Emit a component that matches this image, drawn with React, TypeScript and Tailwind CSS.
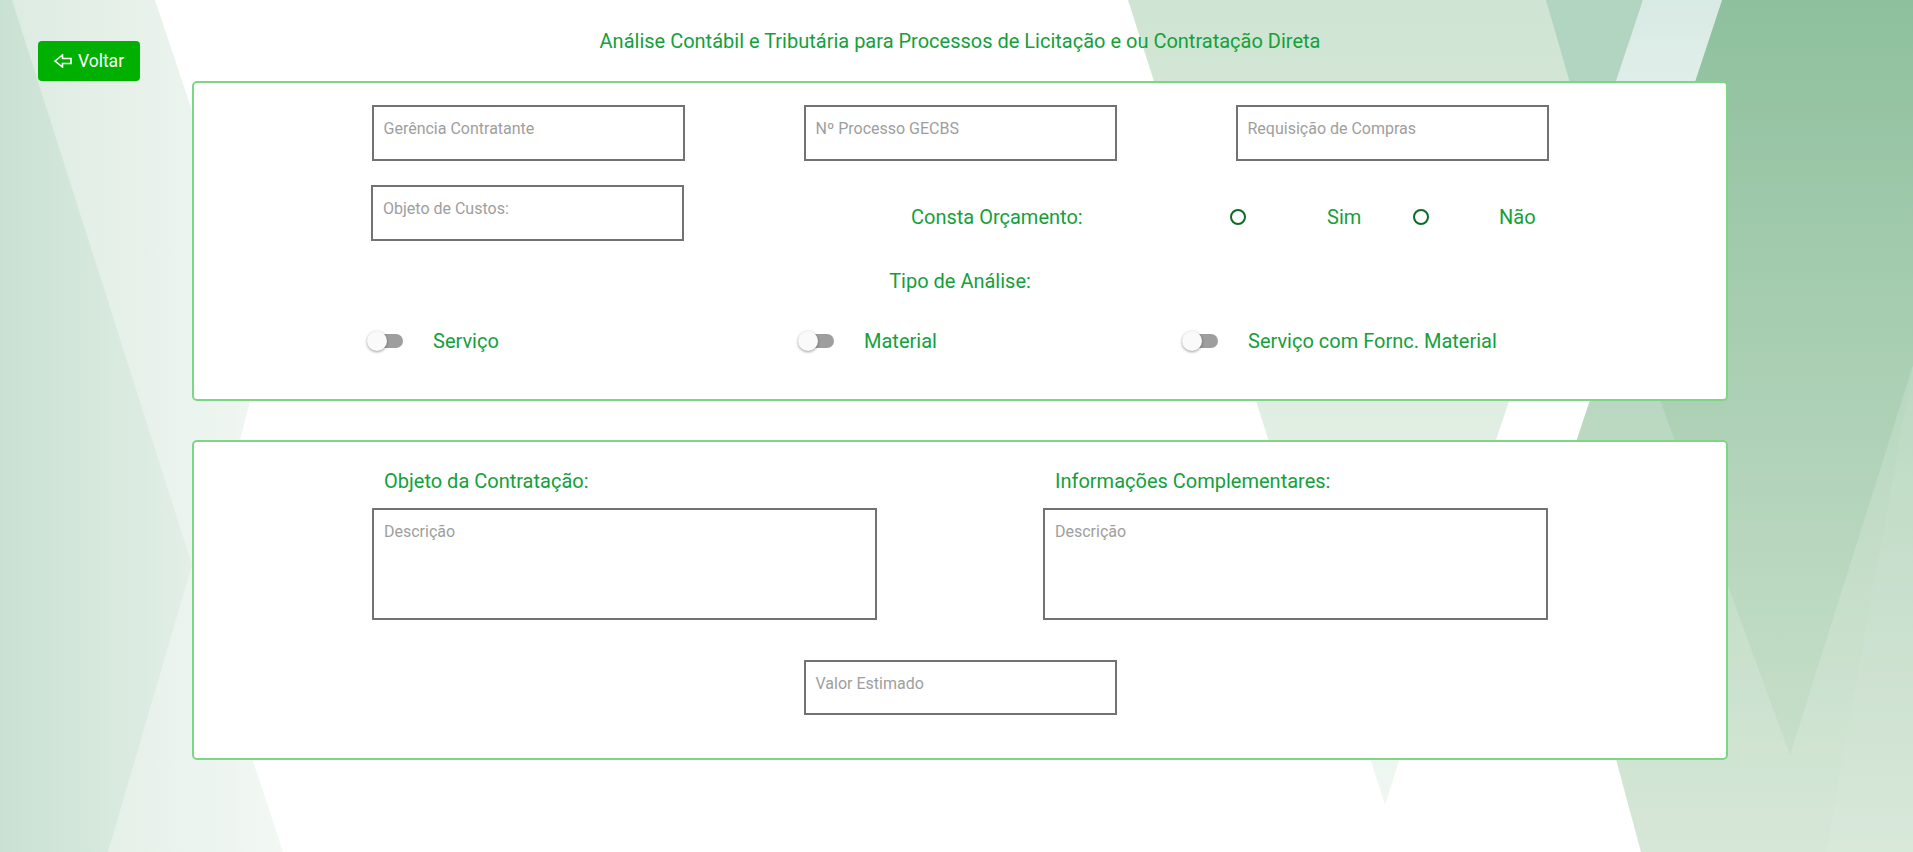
import React from "react";

const label = "text-[20px] leading-6 text-[#14a03b]";

function Field({ placeholder, className }: { placeholder: string; className: string }) {
  return (
    <textarea
      placeholder={placeholder}
      className={`${className} block resize-none rounded-none border-2 border-[#727272] bg-white px-[10px] pt-[10px] text-[16px] leading-6 text-[#333] outline-none placeholder:text-[#9e9e9e]`}
    />
  );
}

function Radio() {
  return <span className="block h-4 w-4 shrink-0 rounded-full border-2 border-[#0c6c24]" />;
}

function Toggle() {
  return (
    <span className="relative block h-5 w-9 shrink-0">
      <span className="absolute left-[2px] top-[3px] h-[14px] w-[34px] rounded-full bg-[#9e9e9e]" />
      <span className="absolute left-0 top-0 h-5 w-5 rounded-full bg-[#fafafa] shadow-[0_1px_3px_rgba(0,0,0,0.4)]" />
    </span>
  );
}

function Background() {
  return (
    <svg
      className="pointer-events-none absolute inset-0 h-full w-full"
      viewBox="0 0 1913 852"
      preserveAspectRatio="none"
    >
      <defs>
        <linearGradient id="lLight" gradientUnits="userSpaceOnUse" x1="0" y1="0" x2="290" y2="0">
          <stop offset="0" stopColor="#dcebe1" />
          <stop offset="1" stopColor="#f3f8f4" />
        </linearGradient>
        <linearGradient id="lDark" gradientUnits="userSpaceOnUse" x1="0" y1="0" x2="195" y2="0">
          <stop offset="0" stopColor="#c9e1d2" />
          <stop offset="1" stopColor="#e3efe7" />
        </linearGradient>
        <linearGradient id="rA" gradientUnits="userSpaceOnUse" x1="0" y1="0" x2="0" y2="805">
          <stop offset="0" stopColor="#cfe4d2" />
          <stop offset="1" stopColor="#f0f7f2" />
        </linearGradient>
        <linearGradient id="rC" gradientUnits="userSpaceOnUse" x1="0" y1="0" x2="0" y2="420">
          <stop offset="0" stopColor="#d8eae4" />
          <stop offset="1" stopColor="#ffffff" />
        </linearGradient>
        <linearGradient id="rD" gradientUnits="userSpaceOnUse" x1="0" y1="0" x2="0" y2="852">
          <stop offset="0" stopColor="#8ec09d" />
          <stop offset="1" stopColor="#cfe3d0" />
        </linearGradient>
      </defs>
      <polygon points="0,0 155,0 267,336 199,597 283,852 0,852" fill="url(#lLight)" />
      <polygon points="0,0 12,0 192,565 108,852 0,852" fill="url(#lDark)" />
      <polygon points="1128,0 1643,0 1385,805" fill="url(#rA)" />
      <polygon points="1546,0 1643,0 1594,166" fill="#b2d5c1" />
      <polygon points="1643,0 1722,0 1551,518 1470,518" fill="url(#rC)" />
      <polygon points="1722,0 1913,0 1913,852 1641,852 1551,518" fill="url(#rD)" />
      <polygon
        points="1551,518 1623,299 1790,755 1913,365 1913,852 1641,852"
        fill="#ffffff"
        fillOpacity="0.16"
      />
      <polygon points="1913,365 1826,852 1913,852" fill="#ffffff" fillOpacity="0.06" />
    </svg>
  );
}

export default function App() {
  return (
    <div className="relative h-[852px] w-full overflow-hidden bg-white font-['Roboto',sans-serif]">
      <Background />
      <div className="relative">
        <div className="relative h-[81px]">
          <button className="absolute left-[38px] top-[41px] flex h-[40px] w-[102px] items-center justify-center gap-[6px] rounded-[4px] bg-[#00b000] text-[17.5px] text-white">
            <svg width="18" height="14" viewBox="0 0 18 14" fill="none">
              <path
                d="M1 7 L8.5 1 L8.5 4.5 L17 4.5 L17 9.5 L8.5 9.5 L8.5 13 Z"
                stroke="white"
                strokeWidth="1.6"
                strokeLinejoin="miter"
              />
            </svg>
            <span>Voltar</span>
          </button>
          <div className={`ml-[192px] w-[1536px] pt-[29px] text-center ${label}`}>
            Análise Contábil e Tributária para Processos de Licitação e ou Contratação Direta
          </div>
        </div>

        <div className="ml-[192px] h-[320px] w-[1536px] rounded-[5px] border-2 border-[#7cd686] bg-white">
          <div className="mt-[22px] grid grid-cols-[repeat(3,432px)] justify-center justify-items-center">
            <Field placeholder="Gerência Contratante" className="h-[56px] w-[313px]" />
            <Field placeholder="Nº Processo GECBS" className="h-[56px] w-[313px]" />
            <Field placeholder="Requisição de Compras" className="h-[56px] w-[313px]" />
          </div>

          <div className="mt-[24px] flex h-[56px] items-start pl-[177px]">
            <Field placeholder="Objeto de Custos:" className="h-[56px] w-[313px] shrink-0" />
            <div className={`ml-[227px] mt-[20px] flex h-6 items-center ${label}`}>
              <span className="w-[319px]">Consta Orçamento:</span>
              <Radio />
              <span className="ml-[81px] w-[86px]">Sim</span>
              <Radio />
              <span className="ml-[70px]">Não</span>
            </div>
          </div>

          <div className={`mt-[28px] text-center ${label}`}>Tipo de Análise:</div>

          <div className={`mt-[36px] flex h-6 items-center pl-[173px] ${label}`}>
            <div className="flex w-[431px] items-center">
              <Toggle />
              <span className="ml-[30px]">Serviço</span>
            </div>
            <div className="flex w-[384px] items-center">
              <Toggle />
              <span className="ml-[30px]">Material</span>
            </div>
            <div className="flex items-center">
              <Toggle />
              <span className="ml-[30px]">Serviço com Fornc. Material</span>
            </div>
          </div>
        </div>

        <div className="ml-[192px] mt-[39px] h-[320px] w-[1536px] rounded-[5px] border-2 border-[#7cd686] bg-white">
          <div className="mt-[27px] flex justify-center gap-[166px]">
            <div className="w-[505px]">
              <div className={`pl-[12px] ${label}`}>Objeto da Contratação:</div>
              <Field placeholder="Descrição" className="mt-[15px] h-[112px] w-[505px]" />
            </div>
            <div className="w-[505px]">
              <div className={`pl-[12px] ${label}`}>Informações Complementares:</div>
              <Field placeholder="Descrição" className="mt-[15px] h-[112px] w-[505px]" />
            </div>
          </div>
          <div className="mt-[40px] flex justify-center">
            <Field placeholder="Valor Estimado" className="h-[55px] w-[313px]" />
          </div>
        </div>
      </div>
    </div>
  );
}
